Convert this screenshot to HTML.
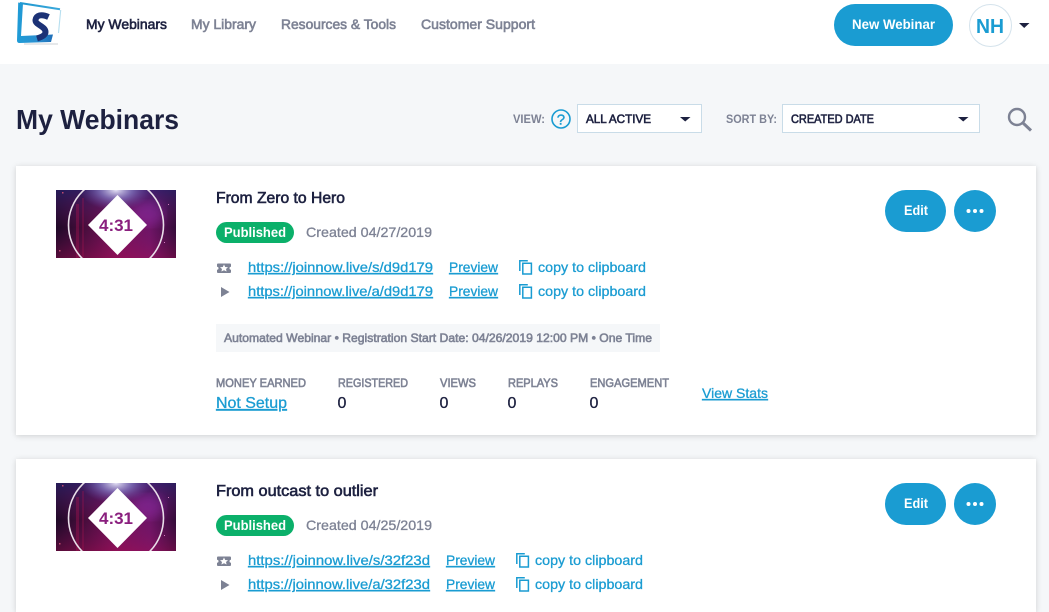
<!DOCTYPE html>
<html lang="en">
<head>
<meta charset="utf-8">
<title>My Webinars</title>
<style>
html,body{margin:0;padding:0;width:1049px;height:612px;overflow:hidden;background:#f5f7f9}
svg{display:block;position:absolute;left:0;top:0}
text{font-family:"Liberation Sans",Arial,sans-serif;white-space:pre}
.m{stroke-width:.6px;paint-order:stroke}
.nav{font-size:14px;fill:#7d8294;stroke:#7d8294}
.lbl{font-size:12px;font-weight:700;fill:#7d8294}
.sel{font-size:12px;fill:#1d2140;stroke:#1d2140}
.lnk{font-size:14px;fill:#1a9cd2;stroke:#1a9cd2;stroke-width:.3px;paint-order:stroke;text-decoration:underline}
.cp{font-size:14px;fill:#1a9cd2;stroke:#1a9cd2;stroke-width:.3px;paint-order:stroke}
.ttl{font-size:16px;fill:#1d2140;stroke:#1d2140}
.gry{font-size:14px;fill:#7d8294;stroke:#7d8294;stroke-width:.3px;paint-order:stroke}
.pub{font-size:14px;font-weight:700;fill:#fff}
.btn{font-size:14px;font-weight:700;fill:#fff}
.val{font-size:16px;fill:#1d2140;stroke:#1d2140;stroke-width:.3px;paint-order:stroke}
.ib{font-size:12px;fill:#7d8294;stroke:#7d8294}
.tm{font-size:17px;font-weight:700;fill:#8a1f7e}
</style>
</head>
<body>
<svg width="1049" height="612" viewBox="0 0 1049 612" xmlns="http://www.w3.org/2000/svg">
<defs>
<filter id="sh" x="-3%" y="-10%" width="106%" height="120%"><feDropShadow dx="0" dy="1" stdDeviation="3" flood-color="#000" flood-opacity=".16"/></filter>
<filter id="bl"><feGaussianBlur stdDeviation="5"/></filter>
<linearGradient id="lb" x1="0" y1="0" x2="1" y2="0"><stop offset="0" stop-color="#1f9cd6"/><stop offset=".55" stop-color="#2a8fd0"/><stop offset="1" stop-color="#1f6fb8"/></linearGradient>
<linearGradient id="lt" x1="0" y1="0" x2="1" y2="0"><stop offset="0" stop-color="#1f97cf"/><stop offset="1" stop-color="#3aa8db"/></linearGradient>
<linearGradient id="tb" x1="0" y1="0" x2="1" y2="0"><stop offset="0" stop-color="#14071f"/><stop offset=".22" stop-color="#3d0b34"/><stop offset=".5" stop-color="#7a0f55"/><stop offset=".78" stop-color="#6e1466"/><stop offset="1" stop-color="#2c0a33"/></linearGradient>
<linearGradient id="tb2" x1="0" y1="0" x2="0" y2="1"><stop offset="0" stop-color="#2c2470" stop-opacity=".7"/><stop offset=".55" stop-color="#7a1a6e" stop-opacity=".1"/><stop offset="1" stop-color="#a81058" stop-opacity=".45"/></linearGradient>
<radialGradient id="tg" cx=".5" cy="0" r=".3"><stop offset="0" stop-color="#e6e3f5"/><stop offset=".45" stop-color="#8a80c8" stop-opacity=".7"/><stop offset="1" stop-color="#6a4aa8" stop-opacity="0"/></radialGradient>
<clipPath id="tc"><rect width="120" height="68"/></clipPath>
<g id="thumb" clip-path="url(#tc)">
<rect width="120" height="68" fill="url(#tb)"/>
<rect width="120" height="68" fill="url(#tb2)"/>
<ellipse cx="92" cy="24" rx="16" ry="12" fill="#8a2aa0" opacity=".55" filter="url(#bl)"/>
<rect width="120" height="68" fill="url(#tg)"/>
<rect x="20" y="14" width="3" height="54" fill="#a5154f" opacity=".4"/>
<rect x="26" y="8" width="2" height="60" fill="#a5154f" opacity=".3"/>
<rect x="6" y="2" width="1.500" height="1.500" fill="#c04a70"/><rect x="3" y="60" width="1.500" height="1.500" fill="#c04a70"/><rect x="112" y="14" width="1" height="1" fill="#d07ac0"/><rect x="108" y="52" width="1" height="1" fill="#d07ac0"/>
<circle cx="60" cy="35" r="47.500" fill="none" stroke="#e9dfe9" stroke-width="1.600"/>
<path d="M61.500 5L91 35 61.500 65 32 35Z" fill="#fff"/>
</g>
<g id="copy" fill="none" stroke="#1a9cd2" stroke-width="1.500">
<path d="M3.800 3.200H12.400V14H3.800Z"/>
<path d="M.8 11V.8H8.800"/>
</g>
<path id="tick" fill="#7d8294" d="M1 .5H13Q14 .5 14 1.500V3.800A1.500 1.500 0 0 0 14 6.800V9Q14 10 13 10H1Q0 10 0 9V6.800A1.500 1.500 0 0 0 0 3.800V1.500Q0 .5 1 .5Z"/>
</defs>

<!-- header -->
<rect x="0" y="0" width="1049" height="64" fill="#fff"/>
<rect x="24" y="43" width="34" height="2" fill="#e6e8ea"/>
<path d="M20 3L60 9.300" stroke="url(#lt)" stroke-width="2" fill="none"/>
<path d="M60.700 10L58.500 33" stroke="#b5deef" stroke-width="1.100" fill="none"/>
<path d="M18.200 2.500L23 3.200 21 36 53 34.500 51 42 19.500 43Q17 43 17 40.500Z" fill="url(#lb)"/>
<path d="M48.500 17C41 13.500 36 15.500 35.500 20C35 25 45.500 26 45.500 32C45.500 35 42 37 37 38.500" fill="none" stroke="#1c3276" stroke-width="6"/>
<text x="86" y="29" class="nav m" style="fill:#1d2140;stroke:#1d2140" textLength="81" lengthAdjust="spacingAndGlyphs">My Webinars</text>
<text x="191" y="29" class="nav m" textLength="65" lengthAdjust="spacingAndGlyphs">My Library</text>
<text x="281" y="29" class="nav m" textLength="115" lengthAdjust="spacingAndGlyphs">Resources &amp; Tools</text>
<text x="421" y="29" class="nav m" textLength="114" lengthAdjust="spacingAndGlyphs">Customer Support</text>
<rect x="834" y="4" width="119" height="42" rx="21" fill="#1a9cd2"/>
<text x="852" y="29" class="btn" textLength="83" lengthAdjust="spacingAndGlyphs">New Webinar</text>
<circle cx="990.500" cy="25.500" r="21" fill="#fff" stroke="#d5e3ec"/>
<text x="976" y="33" font-size="20" font-weight="700" fill="#1a9cd2" textLength="28" lengthAdjust="spacingAndGlyphs">NH</text>
<path d="M1019 23H1029.500L1024.200 28Z" fill="#1d2140"/>

<!-- toolbar -->
<text x="16" y="129" font-size="28" font-weight="700" fill="#1d2140" textLength="163" lengthAdjust="spacingAndGlyphs">My Webinars</text>
<text x="513" y="123" class="lbl" textLength="32" lengthAdjust="spacingAndGlyphs">VIEW:</text>
<circle cx="561" cy="119" r="9" fill="none" stroke="#1a9cd2" stroke-width="1.600"/>
<text x="556.800" y="124.500" font-size="15" fill="#1a9cd2" stroke="#1a9cd2" stroke-width=".4">?</text>
<rect x="577.500" y="104.500" width="124" height="28" fill="#fff" stroke="#c9dce8"/>
<text x="586" y="123" class="sel m" textLength="65" lengthAdjust="spacingAndGlyphs">ALL ACTIVE</text>
<path d="M680 117H690.500L685.200 121.500Z" fill="#1d2140"/>
<text x="726" y="123" class="lbl" textLength="51" lengthAdjust="spacingAndGlyphs">SORT BY:</text>
<rect x="782.500" y="104.500" width="197" height="28" fill="#fff" stroke="#c9dce8"/>
<text x="791" y="123" class="sel m" textLength="83" lengthAdjust="spacingAndGlyphs">CREATED DATE</text>
<path d="M958 117H968.500L963.200 121.500Z" fill="#1d2140"/>
<circle cx="1017" cy="117" r="8" fill="none" stroke="#7d8294" stroke-width="2.400"/>
<path d="M1023 123L1031 130.500" stroke="#7d8294" stroke-width="3" fill="none"/>

<!-- card 1 -->
<rect x="16" y="166" width="1020" height="269" fill="#fff" filter="url(#sh)"/>
<use href="#thumb" x="56" y="190"/>
<text x="116" y="231" text-anchor="middle" class="tm">4:31</text>
<text x="216" y="203" class="ttl m" textLength="129" lengthAdjust="spacingAndGlyphs">From Zero to Hero</text>
<rect x="216" y="222" width="78" height="21" rx="10.500" fill="#0bb06a"/>
<text x="224" y="237" class="pub" textLength="62" lengthAdjust="spacingAndGlyphs">Published</text>
<text x="306" y="237" class="gry" textLength="126" lengthAdjust="spacingAndGlyphs">Created 04/27/2019</text>
<use href="#tick" x="217" y="263"/>
<path d="M224 264.500L225.200 267 228 267.300 226 269 226.600 271.500 224 270.200 221.400 271.500 222 269 220 267.300 222.800 267Z" fill="#fff"/>
<text x="248" y="272" class="lnk" textLength="185" lengthAdjust="spacingAndGlyphs">https://joinnow.live/s/d9d179</text>
<text x="449" y="272" class="lnk" textLength="49" lengthAdjust="spacingAndGlyphs">Preview</text>
<use href="#copy" x="519" y="260"/>
<text x="538" y="272" class="cp" textLength="108" lengthAdjust="spacingAndGlyphs">copy to clipboard</text>
<path d="M221 287L229.500 292 221 297Z" fill="#7d8294"/>
<text x="248" y="296" class="lnk" textLength="185" lengthAdjust="spacingAndGlyphs">https://joinnow.live/a/d9d179</text>
<text x="449" y="296" class="lnk" textLength="49" lengthAdjust="spacingAndGlyphs">Preview</text>
<use href="#copy" x="519" y="284"/>
<text x="538" y="296" class="cp" textLength="108" lengthAdjust="spacingAndGlyphs">copy to clipboard</text>
<rect x="216" y="324" width="444" height="28" fill="#f5f7f9"/>
<text x="224" y="342" class="ib m" textLength="428" lengthAdjust="spacingAndGlyphs">Automated Webinar • Registration Start Date: 04/26/2019 12:00 PM • One Time</text>
<text x="216" y="387" class="ib m" textLength="90" lengthAdjust="spacingAndGlyphs">MONEY EARNED</text>
<text x="338" y="387" class="ib m" textLength="70" lengthAdjust="spacingAndGlyphs">REGISTERED</text>
<text x="440" y="387" class="ib m" textLength="36" lengthAdjust="spacingAndGlyphs">VIEWS</text>
<text x="508" y="387" class="ib m" textLength="50" lengthAdjust="spacingAndGlyphs">REPLAYS</text>
<text x="590" y="387" class="ib m" textLength="79" lengthAdjust="spacingAndGlyphs">ENGAGEMENT</text>
<text x="216" y="408" class="lnk" style="font-size:16px" textLength="71" lengthAdjust="spacingAndGlyphs">Not Setup</text>
<text x="337.500" y="408" class="val">0</text>
<text x="439.500" y="408" class="val">0</text>
<text x="507.500" y="408" class="val">0</text>
<text x="589.500" y="408" class="val">0</text>
<text x="702" y="398" class="lnk" textLength="66" lengthAdjust="spacingAndGlyphs">View Stats</text>
<rect x="885" y="190" width="61" height="42" rx="21" fill="#1a9cd2"/>
<text x="904" y="215" class="btn" textLength="24" lengthAdjust="spacingAndGlyphs">Edit</text>
<circle cx="975" cy="211" r="21" fill="#1a9cd2"/>
<circle cx="968.500" cy="211" r="2" fill="#fff"/><circle cx="975" cy="211" r="2" fill="#fff"/><circle cx="981.500" cy="211" r="2" fill="#fff"/>

<!-- card 2 -->
<rect x="16" y="459" width="1020" height="153" fill="#fff" filter="url(#sh)"/>
<use href="#thumb" x="56" y="483"/>
<text x="116" y="524" text-anchor="middle" class="tm">4:31</text>
<text x="216" y="496" class="ttl m" textLength="162" lengthAdjust="spacingAndGlyphs">From outcast to outlier</text>
<rect x="216" y="515" width="78" height="21" rx="10.500" fill="#0bb06a"/>
<text x="224" y="530" class="pub" textLength="62" lengthAdjust="spacingAndGlyphs">Published</text>
<text x="306" y="530" class="gry" textLength="126" lengthAdjust="spacingAndGlyphs">Created 04/25/2019</text>
<use href="#tick" x="217" y="556"/>
<path d="M224 557.500L225.200 560 228 560.300 226 562 226.600 564.500 224 563.200 221.400 564.500 222 562 220 560.300 222.800 560Z" fill="#fff"/>
<text x="248" y="565" class="lnk" textLength="182" lengthAdjust="spacingAndGlyphs">https://joinnow.live/s/32f23d</text>
<text x="446" y="565" class="lnk" textLength="49" lengthAdjust="spacingAndGlyphs">Preview</text>
<use href="#copy" x="516" y="553"/>
<text x="535" y="565" class="cp" textLength="108" lengthAdjust="spacingAndGlyphs">copy to clipboard</text>
<path d="M221 580L229.500 585 221 590Z" fill="#7d8294"/>
<text x="248" y="589" class="lnk" textLength="182" lengthAdjust="spacingAndGlyphs">https://joinnow.live/a/32f23d</text>
<text x="446" y="589" class="lnk" textLength="49" lengthAdjust="spacingAndGlyphs">Preview</text>
<use href="#copy" x="516" y="577"/>
<text x="535" y="589" class="cp" textLength="108" lengthAdjust="spacingAndGlyphs">copy to clipboard</text>
<rect x="885" y="483" width="61" height="42" rx="21" fill="#1a9cd2"/>
<text x="904" y="508" class="btn" textLength="24" lengthAdjust="spacingAndGlyphs">Edit</text>
<circle cx="975" cy="504" r="21" fill="#1a9cd2"/>
<circle cx="968.500" cy="504" r="2" fill="#fff"/><circle cx="975" cy="504" r="2" fill="#fff"/><circle cx="981.500" cy="504" r="2" fill="#fff"/>
</svg>
</body>
</html>
